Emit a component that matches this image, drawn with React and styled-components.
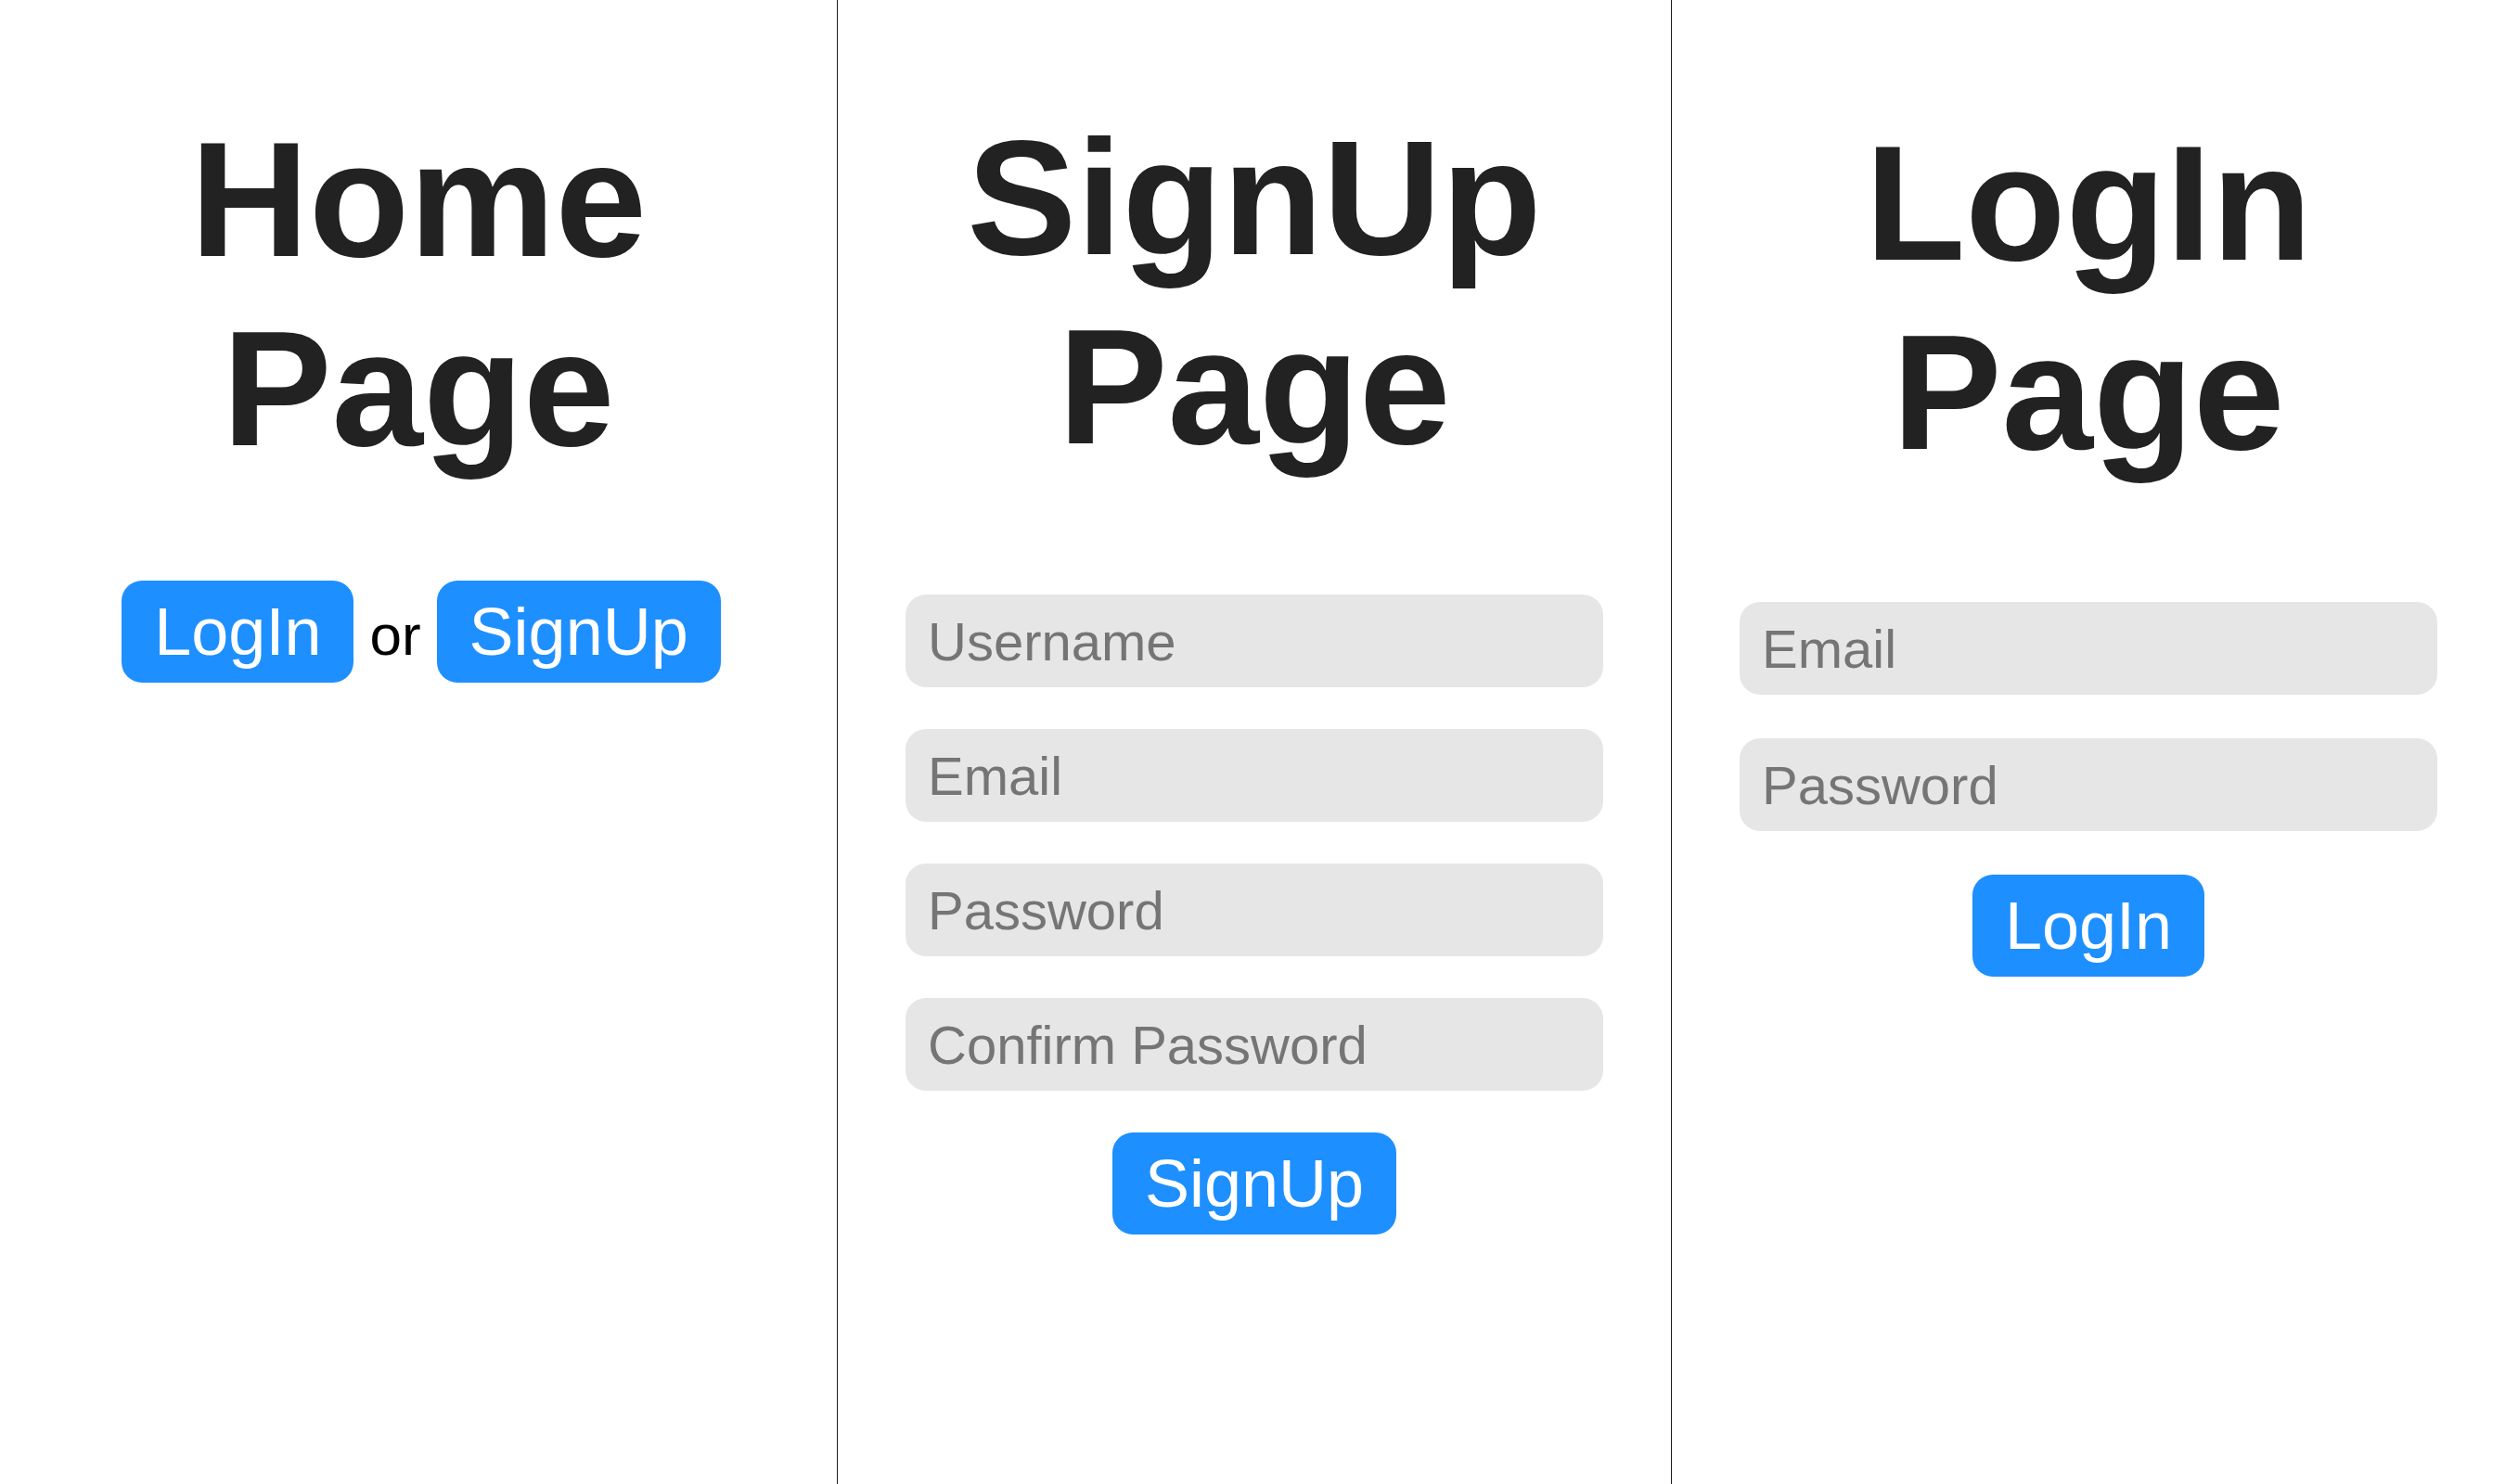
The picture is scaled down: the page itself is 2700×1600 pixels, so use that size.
import React from "react";
import styled, { createGlobalStyle } from "styled-components";

const GlobalStyle = createGlobalStyle`
  html, body {
    margin: 0;
    padding: 0;
    background: #ffffff;
    font-family: "Liberation Sans", Arial, Helvetica, sans-serif;
  }
  * {
    box-sizing: border-box;
  }
`;

const Page = styled.main`
  display: grid;
  grid-template-columns: 902px 899px 1fr;
  min-height: 100vh;
`;

const Column = styled.section`
  display: flex;
  flex-direction: column;
  align-items: center;
  padding-top: ${(p) => p.$top || 113}px;
  border-left: ${(p) => (p.$first ? "none" : "1px solid #1c1c1c")};
`;

const Title = styled.h1`
  margin: 0;
  font-size: 177px;
  font-weight: 700;
  line-height: normal;
  color: #222222;
  text-align: center;
`;

const Choice = styled.div`
  display: flex;
  align-items: baseline;
  justify-content: center;
  gap: 17px;
  margin-top: 105px;
  padding-left: 6px;
`;

const Or = styled.span`
  font-size: 62px;
  color: #000000;
`;

const Button = styled.button`
  font-family: inherit;
  font-size: 72px;
  line-height: normal;
  color: #ffffff;
  background: #1e8fff;
  border: none;
  border-radius: 22px;
  padding: 14px 35px;
  cursor: pointer;
`;

const Form = styled.form`
  display: flex;
  flex-direction: column;
  align-items: center;
  gap: ${(p) => p.$gap || 45}px;
  margin-top: ${(p) => p.$top || 121}px;
`;

const Input = styled.input`
  width: 752px;
  height: 100px;
  padding: 0 24px;
  font-family: inherit;
  font-size: 58px;
  color: #333333;
  background: #e6e6e6;
  border: none;
  border-radius: 22px;
  outline: none;
  &::placeholder {
    color: #757575;
  }
`;

export default function App() {
  return (
    <>
      <GlobalStyle />
      <Page>
        <Column $first>
          <Title>
            Home
            <br />
            Page
          </Title>
          <Choice>
            <Button>LogIn</Button>
            <Or>or</Or>
            <Button>SignUp</Button>
          </Choice>
        </Column>
        <Column $top={111}>
          <Title>
            SignUp
            <br />
            Page
          </Title>
          <Form $top={122} onSubmit={(e) => e.preventDefault()}>
            <Input type="text" placeholder="Username" />
            <Input type="email" placeholder="Email" />
            <Input type="password" placeholder="Password" />
            <Input type="password" placeholder="Confirm Password" />
            <Button type="submit">SignUp</Button>
          </Form>
        </Column>
        <Column $top={117}>
          <Title>
            LogIn
            <br />
            Page
          </Title>
          <Form $top={124} $gap={47} onSubmit={(e) => e.preventDefault()}>
            <Input type="email" placeholder="Email" />
            <Input type="password" placeholder="Password" />
            <Button type="submit">LogIn</Button>
          </Form>
        </Column>
      </Page>
    </>
  );
}
